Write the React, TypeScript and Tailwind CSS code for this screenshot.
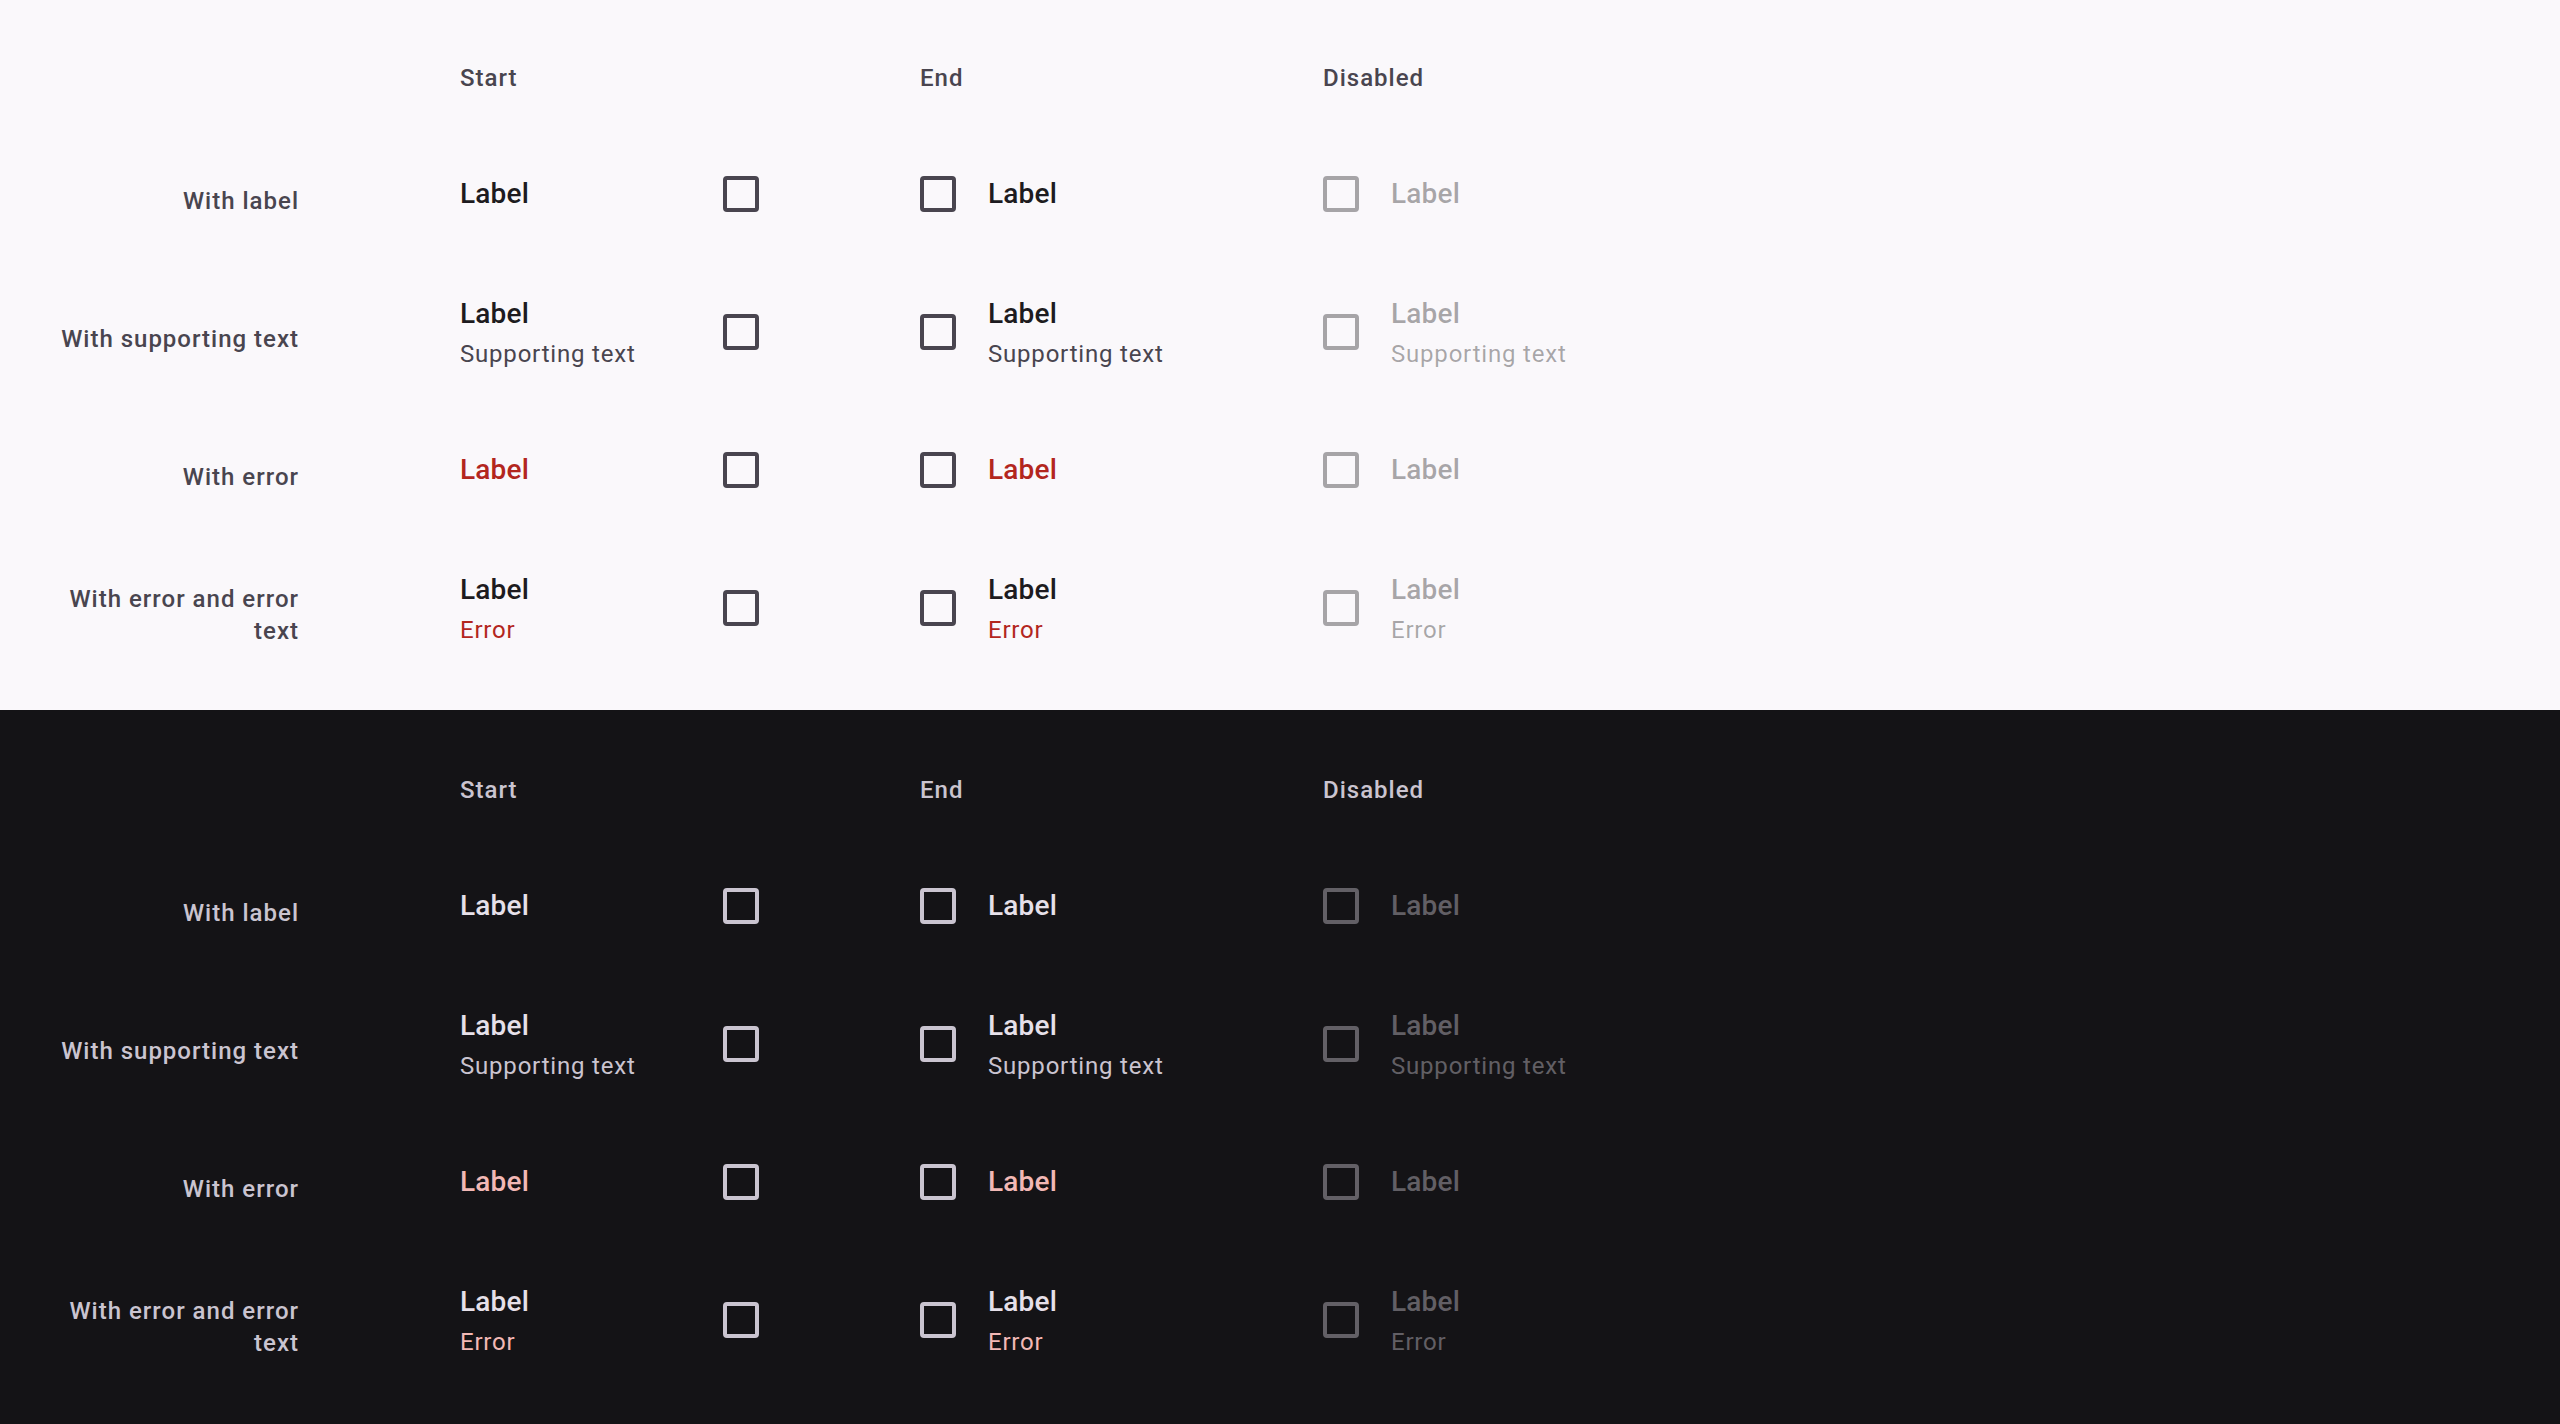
import React from "react";

type Theme = "light" | "dark";

const rows = [
  { name: "With label", kind: "label" },
  { name: "With supporting text", kind: "support" },
  { name: "With error", kind: "error" },
  { name: "With error and error text", kind: "errortext" },
] as const;

type Kind = (typeof rows)[number]["kind"];

function Box({ theme, disabled }: { theme: Theme; disabled?: boolean }) {
  const cls = disabled
    ? theme === "light"
      ? "border-[#1D1B20]/[0.38]"
      : "border-[#E6E0E9]/[0.38]"
    : theme === "light"
      ? "border-[#49454F]"
      : "border-[#CAC4D0]";
  return <div className={`w-[36px] h-[36px] shrink-0 rounded-[4px] border-[4px] ${cls}`} />;
}

function Text({ theme, kind, disabled }: { theme: Theme; kind: Kind; disabled?: boolean }) {
  const light = theme === "light";
  let labelColor = light ? "text-[#1D1B20]" : "text-[#E6E0E9]";
  if (kind === "error") labelColor = light ? "text-[#B3261E]" : "text-[#F2B8B5]";
  let subColor = light ? "text-[#49454F]" : "text-[#CAC4D0]";
  if (kind === "errortext") subColor = light ? "text-[#B3261E]" : "text-[#F2B8B5]";
  if (disabled) {
    labelColor = light ? "text-[#1D1B20]/[0.38]" : "text-[#E6E0E9]/[0.38]";
    subColor = light ? "text-[#1D1B20]/[0.38]" : "text-[#E6E0E9]/[0.38]";
  }
  const sub = kind === "support" ? "Supporting text" : kind === "errortext" ? "Error" : null;
  return (
    <div className="flex flex-col whitespace-nowrap">
      <div className={`text-[28px] leading-[40px] font-medium tracking-[0.2px] ${labelColor}`}>Label</div>
      {sub && (
        <div className={`mt-[4px] text-[24px] leading-[32px] tracking-[0.8px] ${subColor}`}>{sub}</div>
      )}
    </div>
  );
}

function Section({ theme }: { theme: Theme }) {
  const light = theme === "light";
  const head = light ? "text-[#49454F]" : "text-[#CAC4D0]";
  return (
    <div
      className={`${light ? "bg-[#FAF8FB] h-[710px] pt-[31px]" : "bg-[#141316] flex-1 pt-[33px]"} pl-[49px] pb-[33px]`}
    >
      <div className="grid grid-cols-[250px_299px_242px_240px] gap-x-[161px] auto-rows-[138px] grid-rows-[94px]">
        <div />
        {["Start", "End", "Disabled"].map((h) => (
          <div
            key={h}
            className={`self-center text-[24px] leading-[32px] font-medium tracking-[1px] ${head}`}
          >
            {h}
          </div>
        ))}
        {rows.map((r) => (
          <React.Fragment key={r.name}>
            <div
              className={`self-center pt-[13px] text-right text-[24px] leading-[32px] font-medium tracking-[1px] ${head}`}
            >
              {r.name}
            </div>
            <div className="flex items-center justify-between">
              <Text theme={theme} kind={r.kind} />
              <Box theme={theme} />
            </div>
            <div className="flex items-center gap-[32px]">
              <Box theme={theme} />
              <Text theme={theme} kind={r.kind} />
            </div>
            <div className="flex items-center gap-[32px]">
              <Box theme={theme} disabled />
              <Text theme={theme} kind={r.kind} disabled />
            </div>
          </React.Fragment>
        ))}
      </div>
    </div>
  );
}

export default function App() {
  return (
    <div
      className="min-h-screen flex flex-col"
      style={{ fontFamily: "Roboto, 'Noto Sans', sans-serif" }}
    >
      <Section theme="light" />
      <Section theme="dark" />
    </div>
  );
}
